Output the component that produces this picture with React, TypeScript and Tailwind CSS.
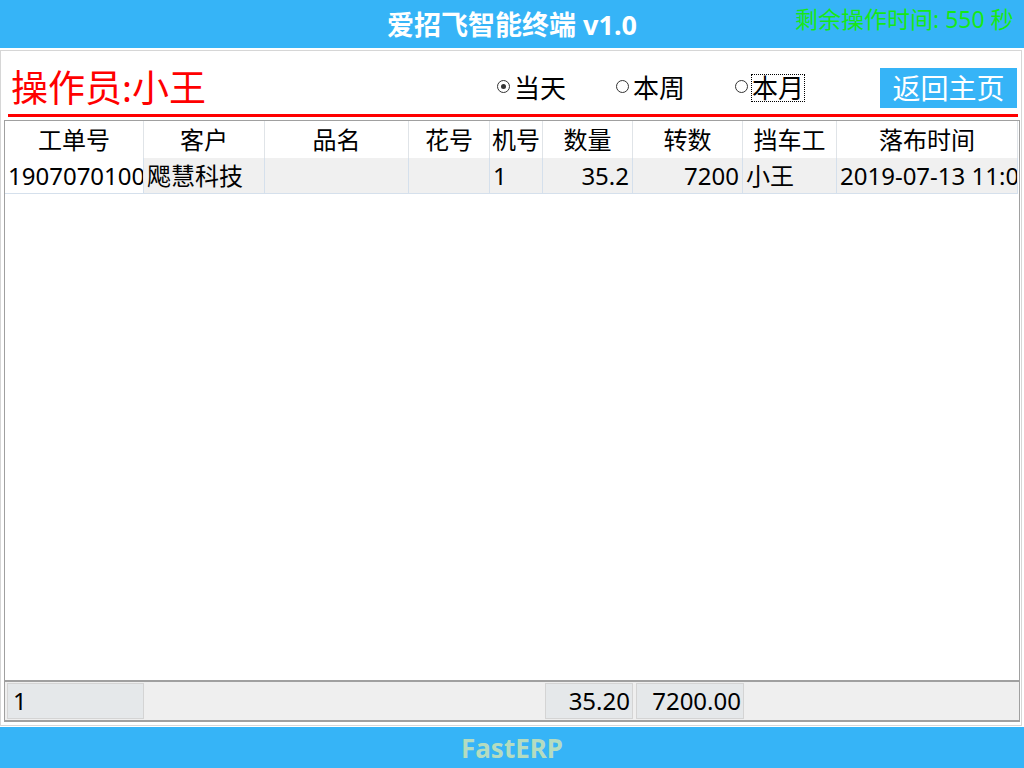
import React from "react"

const font = { fontFamily: '"Noto Sans", "Noto Sans CJK SC", sans-serif' }

const columns = [
  { label: "工单号", w: "w-[139px]" },
  { label: "客户", w: "w-[121px]" },
  { label: "品名", w: "w-[144px]" },
  { label: "花号", w: "w-[81px]" },
  { label: "机号", w: "w-[53px]" },
  { label: "数量", w: "w-[90px]" },
  { label: "转数", w: "w-[110px]" },
  { label: "挡车工", w: "w-[94px]" },
  { label: "落布时间", w: "w-[181px]" },
]

const row = [
  { value: "190707010001", align: "text-left", bg: "bg-white" },
  { value: "飔慧科技", align: "text-left", bg: "bg-[#f0f0f0]" },
  { value: "", align: "text-left", bg: "bg-[#f0f0f0]" },
  { value: "", align: "text-left", bg: "bg-[#f0f0f0]" },
  { value: "1", align: "text-left", bg: "bg-[#f0f0f0]" },
  { value: "35.2", align: "text-right", bg: "bg-[#f0f0f0]" },
  { value: "7200", align: "text-right", bg: "bg-[#f0f0f0]" },
  { value: "小王", align: "text-left", bg: "bg-[#f0f0f0]" },
  { value: "2019-07-13 11:05:26", align: "text-left", bg: "bg-[#f0f0f0]" },
]

function Radio({ label, checked, focused }: { label: string; checked?: boolean; focused?: boolean }) {
  return (
    <div className="flex w-[68px] items-center gap-[3px]">
      <span className="mb-[3px] flex h-[13px] w-[13px] shrink-0 items-center justify-center rounded-full border border-[#333] bg-white">
        {checked && <span className="h-[5px] w-[5px] rounded-full bg-[#333]" />}
      </span>
      <span
        className={
          focused
            ? "whitespace-nowrap border border-dotted border-black text-[26px] leading-[26px] text-black"
            : "whitespace-nowrap border border-transparent text-[26px] leading-[26px] text-black"
        }
      >
        {label}
      </span>
    </div>
  )
}

export default function App() {
  return (
    <div className="flex h-[768px] w-[1024px] flex-col overflow-hidden bg-white" style={font}>
      {/* Title bar */}
      <header className="relative flex h-[48px] shrink-0 items-center justify-center overflow-hidden bg-[#36b4f7]">
        <h1 className="text-[27px] font-bold leading-none text-white">爱招飞智能终端 v1.0</h1>
        <span className="absolute left-[795px] top-[6px] whitespace-nowrap text-[23px] leading-[26px] text-[#17e817]">
          剩余操作时间: 550 秒
        </span>
      </header>

      {/* Main frame */}
      <div className="mt-[2px] mb-[1px] flex h-[676px] w-[1022px] flex-col border border-[#d6d6d6] bg-white">
        <div className="mt-[17px] flex h-[40px] items-center pr-[4px]">
          <span className="ml-[10px] text-[37px] leading-[40px] text-[#ff0000]">操作员:小王</span>
          <div className="ml-auto flex items-center gap-[51px]">
            <Radio label="当天" checked />
            <Radio label="本周" />
            <Radio label="本月" focused />
          </div>
          <button className="ml-[77px] h-[40px] w-[137px] bg-[#36b4f7] text-[28px] leading-[40px] text-white">
            返回主页
          </button>
        </div>

        <div className="mt-[6px] ml-[7px] mr-[3px] h-[3px] bg-[#ff0000]" />

        {/* Grid */}
        <div className="mt-[3px] ml-[3px] mr-[1px] flex h-[602px] flex-col border border-[#a0a0a0] text-[24px] text-black">
          <div className="flex h-[37px] bg-white">
            {columns.map((c) => (
              <div
                key={c.label}
                className={`${c.w} shrink-0 border-r border-[#e0e4e8] text-center leading-[37px]`}
              >
                {c.label}
              </div>
            ))}
          </div>
          <div className="flex h-[36px]">
            {columns.map((c, i) => (
              <div
                key={c.label}
                className={`${c.w} ${row[i].bg} ${row[i].align} shrink-0 overflow-hidden whitespace-nowrap border-r border-b border-[#d5e0ec] px-[3px] leading-[35px]`}
              >
                {row[i].value}
              </div>
            ))}
          </div>
          <div className="flex-1" />

          {/* Summary */}
          <div className="flex h-[41px] items-center border-t-2 border-b border-[#a0a0a0] bg-[#efefef]">
            <div className="ml-[2px] h-[36px] w-[137px] border border-[#d4d4d4] bg-[#e5e8ea] pl-[5px] leading-[34px]">
              1
            </div>
            <div className="ml-[401px] h-[36px] w-[88px] border border-[#d4d4d4] bg-[#e5e8ea] pr-[2px] text-right leading-[34px]">
              35.20
            </div>
            <div className="ml-[3px] h-[36px] w-[108px] border border-[#d4d4d4] bg-[#e5e8ea] pr-[2px] text-right leading-[34px]">
              7200.00
            </div>
          </div>
        </div>
      </div>

      {/* Footer */}
      <footer className="flex h-[41px] shrink-0 items-center justify-center bg-[#36b4f7]">
        <span className="text-[26px] font-bold leading-none text-[#b4dcc0]">FastERP</span>
      </footer>
    </div>
  )
}
